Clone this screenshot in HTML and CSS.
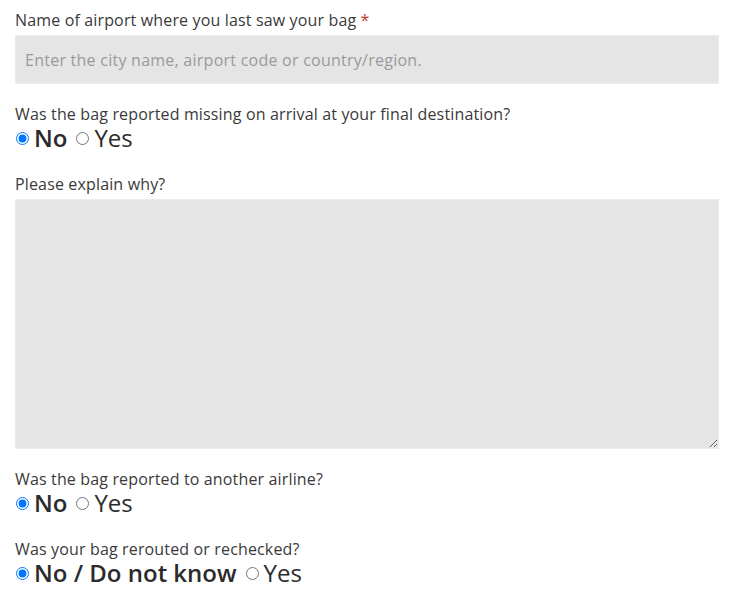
FILE: index.html
```html
<!DOCTYPE html>
<html>
<head>
<meta charset="utf-8">
<link rel="stylesheet" href="styles.css">
</head>
<body>
<form class="form">
  <div class="field">
    <label class="label" for="airport">Name of airport where you last saw your bag <span class="req">*</span></label>
    <input class="text-input" id="airport" type="text" placeholder="Enter the city name, airport code or country/region.">
  </div>
  <div class="field field-radio">
    <div class="label">Was the bag reported missing on arrival at your final destination?</div>
    <div class="radios">
      <label class="opt opt-checked"><input type="radio" name="q1" checked>No</label>
      <label class="opt"><input type="radio" name="q1">Yes</label>
    </div>
  </div>
  <div class="field">
    <label class="label" for="why">Please explain why?</label>
    <textarea class="text-area" id="why"></textarea>
  </div>
  <div class="field field-radio">
    <div class="label">Was the bag reported to another airline?</div>
    <div class="radios">
      <label class="opt opt-checked"><input type="radio" name="q2" checked>No</label>
      <label class="opt"><input type="radio" name="q2">Yes</label>
    </div>
  </div>
  <div class="field field-radio">
    <div class="label">Was your bag rerouted or rechecked?</div>
    <div class="radios">
      <label class="opt opt-checked"><input type="radio" name="q3" checked>No / Do not know</label>
      <label class="opt"><input type="radio" name="q3">Yes</label>
    </div>
  </div>
</form>
</body>
</html>
```

FILE: styles.css
```css
html, body {
  margin: 0;
  padding: 0;
  background: #fff;
}
body {
  font-family: "Open Sans", "Noto Sans", sans-serif;
  color: #333;
}
.form {
  display: flex;
  flex-direction: column;
  padding: 8px 14px 0 15px;
  width: 704px;
}
.field {
  display: flex;
  flex-direction: column;
  margin-bottom: 18px;
}
.field-radio {
  margin-bottom: 22px;
}
.label {
  font-size: 16px;
  line-height: 24px;
  letter-spacing: 0.15px;
  color: #3a3a3a;
  margin-bottom: 3px;
}
.req {
  color: #c0392b;
}
.field-radio .label {
  margin-bottom: 0;
}
.text-input {
  box-sizing: border-box;
  height: 49px;
  width: 704px;
  background: #e5e5e5;
  border: 1px solid #ececec;
  padding: 0 9px;
  font-family: inherit;
  font-size: 16px;
  letter-spacing: 0.25px;
  color: #333;
  outline: none;
}
.text-input::placeholder {
  color: #9a9a9a;
}
.text-area {
  box-sizing: border-box;
  height: 250px;
  width: 704px;
  background: #e5e5e5;
  border: 1px solid #ececec;
  font-family: inherit;
  font-size: 16px;
  margin: 0;
  outline: none;
}
.radios {
  display: flex;
  align-items: center;
  gap: 8px;
}
.opt {
  display: flex;
  align-items: center;
  font-size: 24px;
  line-height: 24px;
  color: #2b2b2b;
  font-weight: 400;
}
.opt-checked {
  font-weight: 600;
}
.opt input {
  margin: 0 5px 0 1px;
  width: 13px;
  height: 13px;
}
```
